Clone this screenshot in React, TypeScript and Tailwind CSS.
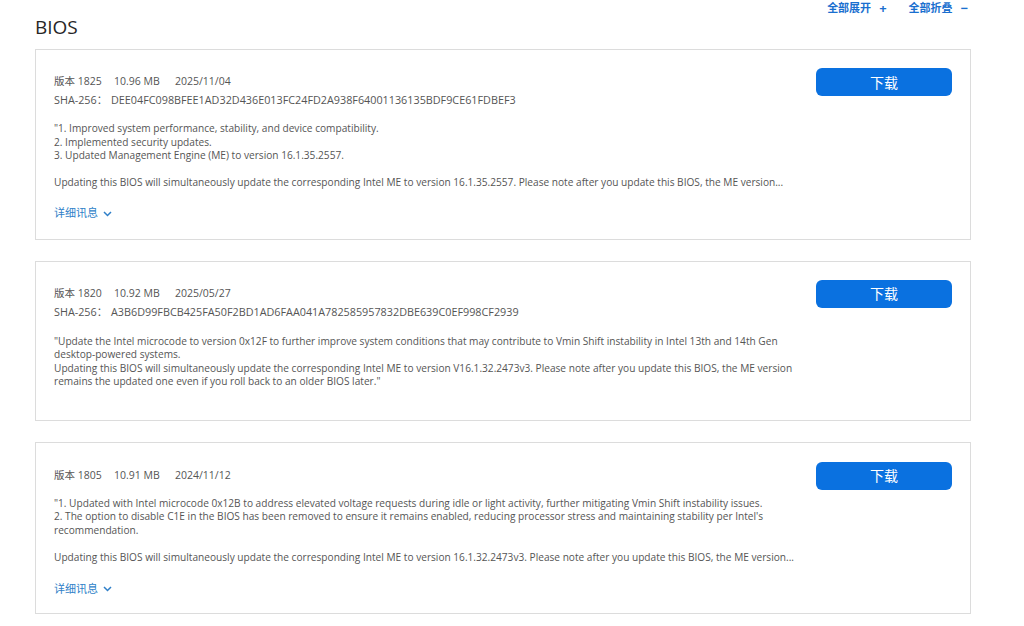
import React from "react";

type Item = {
  version: string;
  size: string;
  date: string;
  sha?: string;
  body: string[];
  details: boolean;
  pad: string;
  dmt: string;
  bmt: string;
};

const items: Item[] = [
  {
    version: "1825",
    size: "10.96 MB",
    date: "2025/11/04",
    sha: "DEE04FC098BFEE1AD32D436E013FC24FD2A938F64001136135BDF9CE61FDBEF3",
    body: [
      "\"1. Improved system performance, stability, and device compatibility.",
      "2. Implemented security updates.",
      "3. Updated Management Engine (ME) to version 16.1.35.2557.",
      "",
      "Updating this BIOS will simultaneously update the corresponding Intel ME to version 16.1.35.2557. Please note after you update this BIOS, the ME version...",
    ],
    details: true,
    pad: "pt-[20px] pb-[15px]",
    dmt: "mt-[14px]",
    bmt: "-mt-[2px]",
  },
  {
    version: "1820",
    size: "10.92 MB",
    date: "2025/05/27",
    sha: "A3B6D99FBCB425FA50F2BD1AD6FAA041A782585957832DBE639C0EF998CF2939",
    body: [
      "\"Update the Intel microcode to version 0x12F to further improve system conditions that may contribute to Vmin Shift instability in Intel 13th and 14th Gen desktop-powered systems.",
      "Updating this BIOS will simultaneously update the corresponding Intel ME to version V16.1.32.2473v3. Please note after you update this BIOS, the ME version remains the updated one even if you roll back to an older BIOS later.\"",
    ],
    details: false,
    pad: "pt-[21px] pb-[31px]",
    dmt: "mt-[14px]",
    bmt: "-mt-[3px]",
  },
  {
    version: "1805",
    size: "10.91 MB",
    date: "2024/11/12",
    body: [
      "\"1. Updated with Intel microcode 0x12B to address elevated voltage requests during idle or light activity, further mitigating Vmin Shift instability issues.",
      "2. The option to disable C1E in the BIOS has been removed to ensure it remains enabled, reducing processor stress and maintaining stability per Intel's recommendation.",
      "",
      "Updating this BIOS will simultaneously update the corresponding Intel ME to version 16.1.32.2473v3. Please note after you update this BIOS, the ME version...",
    ],
    details: true,
    pad: "pt-[22px] pb-[14px]",
    dmt: "mt-[15px]",
    bmt: "-mt-[3px]",
  },
];

const font = { fontFamily: '"Open Sans", "Noto Sans CJK SC", sans-serif' };

function Card({ item }: { item: Item }) {
  return (
    <div className={`flex border border-[#dcdcdc] bg-white pl-[18px] pr-[18px] ${item.pad}`}>
      <div className="w-[748px] text-[#555555]">
        <div className="flex h-[20px] items-center pt-[3px] text-[10.5px]">
          <span className="w-[60px]">版本 {item.version}</span>
          <span className="w-[61px]">{item.size}</span>
          <span>{item.date}</span>
        </div>
        {item.sha && (
          <div className="flex h-[20px] items-center text-[10.8px]">
            <span className="w-[57px]">SHA-256：</span>
            <span>{item.sha}</span>
          </div>
        )}
        <div className="mt-[12px] text-[10.15px] leading-[13.5px]">
          {item.body.map((l, i) => (
            <div key={i} className="min-h-[13.5px]">{l}</div>
          ))}
        </div>
        {item.details && (
          <div className={`${item.dmt} flex h-[20px] items-center gap-[5px] text-[11px] text-[#2f7fc8]`}>
            <span>详细讯息</span>
            <svg width="9" height="6" viewBox="0 0 9 6" fill="none">
              <path d="M1 1l3.5 3.5L8 1" stroke="#2f7fc8" strokeWidth="1.5" />
            </svg>
          </div>
        )}
      </div>
      <div className="ml-auto">
        <button className={`${item.bmt} flex h-[28px] w-[136px] items-center justify-center rounded-[6px] bg-[#0a71e0] text-[14px] text-white`}>
          下载
        </button>
      </div>
    </div>
  );
}

export default function App() {
  return (
    <div className="min-h-[626px] bg-white" style={font}>
      <div className="ml-[35px] w-[936px]">
        <div className="flex h-[49px] items-start justify-between">
          <h1 className="pt-[16px] text-[19px] leading-[22px] text-[#262626]">BIOS</h1>
          <div className="mr-[3px] flex gap-[22px] text-[11px] font-bold leading-[16px] text-[#1a6fcf]">
            <span className="flex gap-[8px]">
              <span>全部展开</span>
              <span className="text-[13px]">+</span>
            </span>
            <span className="flex gap-[8px]">
              <span>全部折叠</span>
              <span className="text-[13px]">−</span>
            </span>
          </div>
        </div>
        <div className="flex flex-col gap-[21px]">
          {items.map((it) => (
            <Card key={it.version} item={it} />
          ))}
        </div>
      </div>
    </div>
  );
}
